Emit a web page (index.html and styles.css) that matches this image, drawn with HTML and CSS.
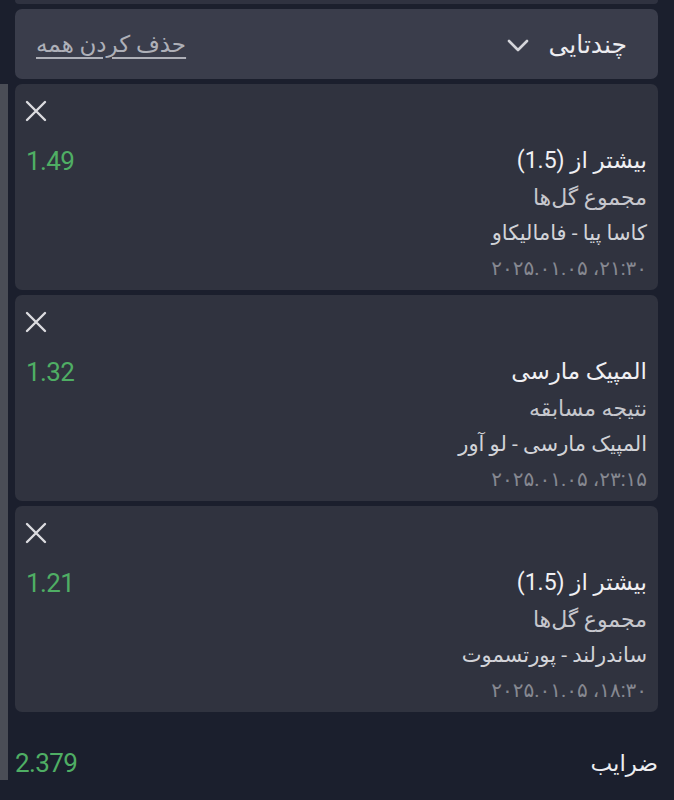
FILE: index.html
```html
<!DOCTYPE html>
<html lang="fa">
<head>
<meta charset="utf-8">
<link rel="stylesheet" href="styles.css">
</head>
<body>
<div class="shell">
  <div class="strip"></div>
  <main class="main">
    <div class="prev-card"></div>
    <div class="header" dir="rtl">
      <div class="mode">
        <span class="mode-label">چندتایی</span>
        <svg class="chev" width="22" height="13" viewBox="0 0 22 13"><path d="M2 2 L11 11 L20 2" fill="none" stroke="#d4d5da" stroke-width="2.6" stroke-linecap="round" stroke-linejoin="round"/></svg>
      </div>
      <a class="clear-all">حذف کردن همه</a>
    </div>

    <div class="bet">
      <svg class="close" width="22" height="22" viewBox="0 0 22 22"><path d="M2 2 L20 20 M20 2 L2 20" stroke="#dcdce0" stroke-width="2.4" stroke-linecap="round"/></svg>
      <div class="bet-body">
        <div class="odds">1.49</div>
        <div class="info" dir="rtl">
          <div class="title">بیشتر از (1.5)</div>
          <div class="market">مجموع گل‌ها</div>
          <div class="teams">کاسا پیا - فامالیکاو</div>
          <div class="date">۲۱:۳۰، ۲۰۲۵.۰۱.۰۵</div>
        </div>
      </div>
    </div>

    <div class="bet">
      <svg class="close" width="22" height="22" viewBox="0 0 22 22"><path d="M2 2 L20 20 M20 2 L2 20" stroke="#dcdce0" stroke-width="2.4" stroke-linecap="round"/></svg>
      <div class="bet-body">
        <div class="odds">1.32</div>
        <div class="info" dir="rtl">
          <div class="title">المپیک مارسی</div>
          <div class="market">نتیجه مسابقه</div>
          <div class="teams">المپیک مارسی - لو آور</div>
          <div class="date">۲۳:۱۵، ۲۰۲۵.۰۱.۰۵</div>
        </div>
      </div>
    </div>

    <div class="bet">
      <svg class="close" width="22" height="22" viewBox="0 0 22 22"><path d="M2 2 L20 20 M20 2 L2 20" stroke="#dcdce0" stroke-width="2.4" stroke-linecap="round"/></svg>
      <div class="bet-body">
        <div class="odds">1.21</div>
        <div class="info" dir="rtl">
          <div class="title">بیشتر از (1.5)</div>
          <div class="market">مجموع گل‌ها</div>
          <div class="teams">ساندرلند - پورتسموت</div>
          <div class="date">۱۸:۳۰، ۲۰۲۵.۰۱.۰۵</div>
        </div>
      </div>
    </div>

    <div class="total">
      <div class="total-odds">2.379</div>
      <div class="total-label" dir="rtl">ضرایب</div>
    </div>
  </main>
</div>
</body>
</html>
```

FILE: styles.css
```css
html, body {
  margin: 0;
  padding: 0;
  background: #1b1f2d;
  height: 800px;
  overflow: hidden;
}

body {
  font-family: Roboto, "DejaVu Sans", sans-serif;
  color: #e6e6ea;
}

.shell {
  display: flex;
  width: 674px;
}

.strip {
  width: 8px;
  height: 696px;
  margin-top: 84px;
  background: #4a4d56;
  flex: none;
}

.main {
  flex: none;
  width: 643px;
  margin-left: 7px;
  display: flex;
  flex-direction: column;
  gap: 5px;
}

.prev-card {
  height: 4px;
  background: #2f3240;
  border-radius: 0 0 6px 6px;
}

.header {
  height: 70px;
  background: #3a3d4b;
  border-radius: 7px;
  display: flex;
  align-items: center;
  justify-content: space-between;
  padding: 0 31px 0 21px;
}

.mode {
  display: flex;
  align-items: center;
  gap: 20px;
}

.mode-label {
  font-size: 25px;
  color: #ececf0;
}

.chev {
  display: block;
  margin-top: 2px;
}

.clear-all {
  font-size: 23px;
  color: #aeb0b8;
  text-decoration: underline;
  text-underline-offset: 5px;
}

.bet {
  height: 206px;
  box-sizing: border-box;
  background: #30333f;
  border-radius: 7px;
  padding: 16px 11px 0 10px;
  display: flex;
  flex-direction: column;
}

.close {
  display: block;
}

.bet-body {
  margin-top: 21px;
  display: flex;
  justify-content: space-between;
  align-items: flex-start;
}

.odds {
  font-size: 26px;
  line-height: 36px;
  letter-spacing: -0.6px;
  color: #4fae64;
  padding-left: 1px;
}

.info {
  display: flex;
  flex-direction: column;
  text-align: right;
}

.title {
  font-size: 23px;
  line-height: 36px;
  color: #f0f0f3;
}

.market {
  font-size: 22px;
  line-height: 38px;
  color: #c6c7cd;
}

.teams {
  font-size: 21px;
  line-height: 32px;
  color: #d2d3d8;
}

.date {
  font-size: 20px;
  line-height: 38px;
  color: #868891;
}

.total {
  margin-top: 28px;
  display: flex;
  justify-content: space-between;
  align-items: center;
  height: 36px;
}

.total-odds {
  font-size: 26px;
  letter-spacing: -0.6px;
  color: #4fae64;
}

.total-label {
  font-size: 23px;
  color: #ececf0;
}
```
